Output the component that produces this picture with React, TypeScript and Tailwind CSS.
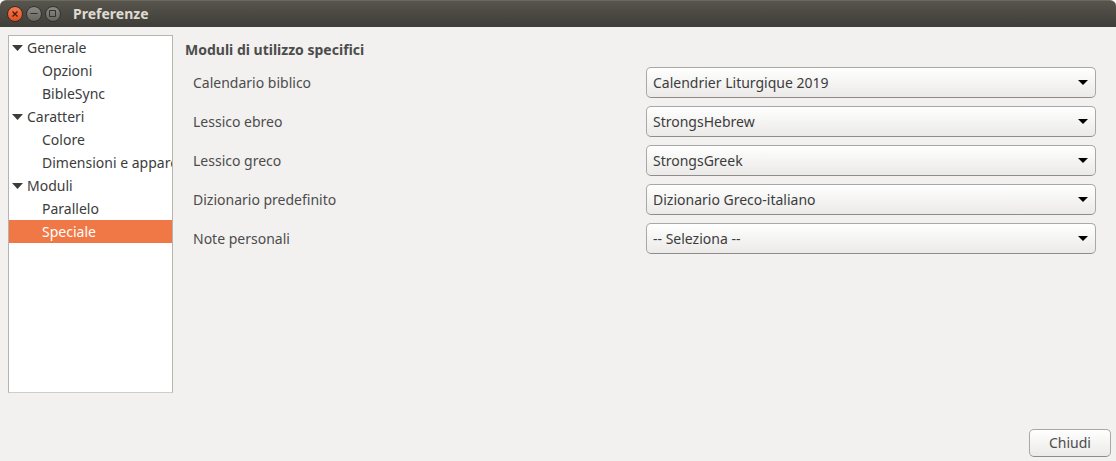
import { useState } from "react";

const sections = [
  { name: "Generale", pages: ["Opzioni", "BibleSync"] },
  { name: "Caratteri", pages: ["Colore", "Dimensioni e apparenza"] },
  { name: "Moduli", pages: ["Parallelo", "Speciale"] },
];

const modules = [
  { id: "calendar", label: "Calendario biblico", value: "Calendrier Liturgique 2019" },
  { id: "hebrew", label: "Lessico ebreo", value: "StrongsHebrew" },
  { id: "greek", label: "Lessico greco", value: "StrongsGreek" },
  { id: "dictionary", label: "Dizionario predefinito", value: "Dizionario Greco-italiano" },
  { id: "notes", label: "Note personali", value: "-- Seleziona --" },
];

const windowButton =
  "size-4 rounded-full border border-[#33322e] bg-linear-to-b from-[#8b8a83] to-[#66655f] text-[#33322e]";

function TitleBar() {
  return (
    <header className="flex h-[27px] shrink-0 items-center gap-[3px] rounded-t-md border-t border-[#6b6a62] bg-linear-to-b from-[#57554c] to-[#3e3d38] pl-[7px]">
      <button
        aria-label="Chiudi finestra"
        className="size-4 rounded-full border border-[#3a2c25] bg-linear-to-b from-[#f5794f] to-[#e2501f] text-[#4a1d0c]"
      >
        <svg viewBox="0 0 14 14" className="size-full" fill="none" stroke="currentColor" strokeWidth="1.4">
          <path d="M4.5 4.5l5 5M9.5 4.5l-5 5" />
        </svg>
      </button>
      <button aria-label="Riduci a icona" className={windowButton}>
        <svg viewBox="0 0 14 14" className="size-full" fill="none" stroke="currentColor">
          <path d="M3.5 6.5h7" />
        </svg>
      </button>
      <button aria-label="Ingrandisci" className={windowButton}>
        <svg viewBox="0 0 14 14" className="size-full" fill="none" stroke="currentColor">
          <path d="M3.5 3.5h6v6h-6z" />
        </svg>
      </button>
      <h1 className="pl-[9px] text-sm font-bold text-[#dfdbd2]">Preferenze</h1>
    </header>
  );
}

function Tree() {
  const [selected, setSelected] = useState("Speciale");
  const [closed, setClosed] = useState<string[]>([]);
  const toggle = (name: string) =>
    setClosed(closed.includes(name) ? closed.filter((n) => n !== name) : [...closed, name]);

  return (
    <nav className="w-[165px] shrink-0 overflow-hidden border border-[#b6b4b1] border-b-[#cfcdca] bg-white text-[#3c3c3c]">
      <ul>
        {sections.map(({ name, pages }) => (
          <li key={name}>
            <button
              aria-expanded={!closed.includes(name)}
              onClick={() => toggle(name)}
              className="flex h-[23px] w-full items-center gap-1 pl-[3px]"
            >
              <svg viewBox="0 0 11 6" className="h-1.5 w-[11px]" fill="#3c3c3c">
                <path d="M0 0h11L5.5 6z" />
              </svg>
              {name}
            </button>
            {!closed.includes(name) && (
              <ul>
                {pages.map((page) => (
                  <li key={page}>
                    <button
                      onClick={() => setSelected(page)}
                      className={
                        page === selected
                          ? "block h-[23px] w-full bg-[#f07746] pl-[33px] text-left whitespace-nowrap text-white"
                          : "block h-[23px] w-full pl-[33px] text-left whitespace-nowrap"
                      }
                    >
                      {page}
                    </button>
                  </li>
                ))}
              </ul>
            )}
          </li>
        ))}
      </ul>
    </nav>
  );
}

function ModuleRow({ id, label, value }: { id: string; label: string; value: string }) {
  return (
    <div className="grid grid-cols-2 items-center gap-[3px]">
      <label htmlFor={id}>{label}</label>
      <div className="grid items-center">
        <select
          id={id}
          defaultValue={value}
          className="col-start-1 row-start-1 h-[31px] w-full appearance-none rounded-[5px] border border-[#aaa8a5] border-b-[#8e8d8a] bg-linear-to-b from-white to-[#ebeae8] pr-6 pl-1.5 text-[#3c3c3c]"
        >
          <option>{value}</option>
        </select>
        <svg
          viewBox="0 0 10 5"
          className="pointer-events-none col-start-1 row-start-1 mr-2 h-[5px] w-2.5 justify-self-end"
          fill="#000"
        >
          <path d="M0 0h10L5 5z" />
        </svg>
      </div>
    </div>
  );
}

export default function App() {
  return (
    <div className="flex min-h-screen flex-col bg-white font-['Noto_Sans','Open_Sans',sans-serif] text-sm text-[#4c4c4c]">
      <TitleBar />
      <div className="flex grow flex-col bg-[#f2f1f0]">
        <div className="flex grow gap-3 pt-2 pr-5 pl-2">
          <Tree />
          <main className="grow">
            <h2 className="pt-[5px] pb-[7px] font-bold">Moduli di utilizzo specifici</h2>
            <form className="flex flex-col gap-2 pl-2">
              {modules.map((m) => (
                <ModuleRow key={m.id} {...m} />
              ))}
            </form>
          </main>
        </div>
        <footer className="flex justify-end pt-9 pr-[5px] pb-1">
          <button className="h-7 rounded-[5px] border border-[#aaa8a5] border-b-[#8e8d8a] bg-linear-to-b from-white to-[#ebeae8] px-[19px] text-[#4c4c4c]">
            Chiudi
          </button>
        </footer>
      </div>
    </div>
  );
}
